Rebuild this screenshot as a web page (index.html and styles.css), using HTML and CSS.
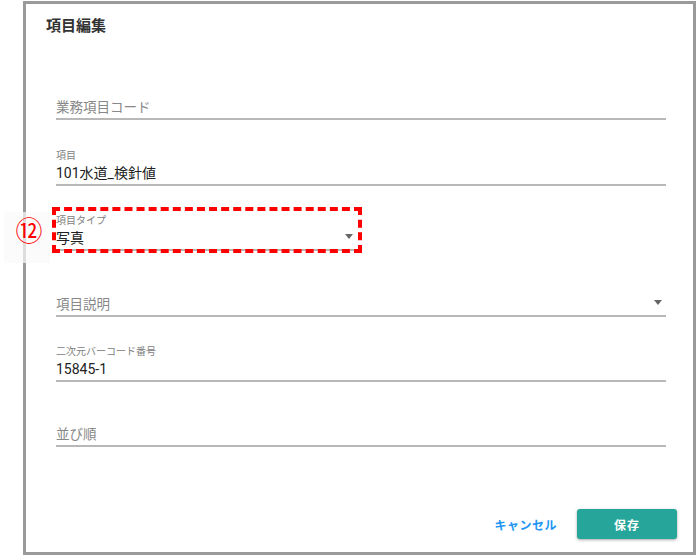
FILE: index.html
```html
<!DOCTYPE html>
<html lang="ja">
<head>
    <meta charset="UTF-8">
    <title>項目編集</title>
    <link rel="stylesheet" href="styles.css">
</head>
<body>
    <div class="dlg">
        <h2 class="tit">項目編集</h2>

        <div class="frm">
            <div class="fld">
                <span class="ph">業務項目コード</span>
            </div>
            <div class="fld">
                <span class="lbl">項目</span>
                <span class="val">101水道_検針値</span>
            </div>
            <div class="fld corto">
                <span class="lbl">項目タイプ</span>
                <span class="val">写真</span>
                <span class="flecha"></span>
                <span class="marca"></span>
                <span class="num">⑫</span>
            </div>
            <div class="fld">
                <span class="ph">項目説明</span>
                <span class="flecha"></span>
            </div>
            <div class="fld">
                <span class="lbl">二次元バーコード番号</span>
                <span class="val">15845-1</span>
            </div>
            <div class="fld">
                <span class="ph">並び順</span>
            </div>
        </div>

        <div class="acc">
            <button class="btn-txt">キャンセル</button>
            <button class="btn-ok">保存</button>
        </div>
    </div>
</body>
</html>
```

FILE: styles.css
```css
body {
    margin: 0;
    background: white;
    font-family: Roboto, "Noto Sans CJK JP", sans-serif;
}

.dlg {
    box-sizing: border-box;
    width: 673px;
    height: 554px;
    margin: 1px 0 0 23px;
    border: 3px solid #9a9a9a;
    padding: 12px 16px 13px 20px;
    display: flex;
    flex-direction: column;
    position: relative;
}

.tit {
    margin: 0;
    font-size: 15px;
    line-height: 20px;
    font-weight: bold;
    color: #333;
}

.frm {
    margin-top: 19px;
    padding: 0 11px 0 10px;
}

.fld {
    position: relative;
    box-sizing: border-box;
    height: 65.4px;
    border-bottom: 2px solid #b8b8b8;
    display: flex;
    flex-direction: column;
    justify-content: flex-end;
}

.corto {
    width: 301px;
}

.lbl {
    font-size: 10px;
    line-height: 12px;
    color: #808080;
}

.val {
    font-size: 14px;
    line-height: 22px;
    color: #222;
}

.ph {
    font-size: 13.5px;
    line-height: 22px;
    color: #888;
}

.flecha {
    position: absolute;
    right: 4px;
    bottom: 10px;
    width: 0;
    height: 0;
    border-left: 4.5px solid transparent;
    border-right: 4.5px solid transparent;
    border-top: 5px solid #666;
}

.marca {
    position: absolute;
    top: 21px;
    left: -4px;
    right: -5px;
    bottom: -4px;
    border: 4px dashed #f00;
}

.num {
    position: absolute;
    left: -52px;
    top: 26px;
    width: 46px;
    height: 51px;
    box-sizing: border-box;
    padding: 3px 0 0 4px;
    background: rgba(250, 250, 250, 0.7);
    color: #f00;
    font-family: "Noto Sans CJK JP", sans-serif;
    font-size: 27px;
    line-height: 30px;
    text-align: center;
}

.acc {
    margin-top: auto;
    display: flex;
    justify-content: flex-end;
    align-items: center;
}

button {
    font-family: Roboto, "Noto Sans CJK JP", sans-serif;
    font-size: 12px;
    font-weight: bold;
    border: none;
    cursor: pointer;
}

.btn-txt {
    background: none;
    color: #2196f3;
    padding: 0;
    margin-right: 20px;
    letter-spacing: 0.5px;
}

.btn-ok {
    width: 100px;
    height: 30px;
    background: #26a69a;
    color: white;
    border-radius: 3px;
    box-shadow: 0 1px 3px rgba(0,0,0,0.35);
    letter-spacing: 1px;
}
```
